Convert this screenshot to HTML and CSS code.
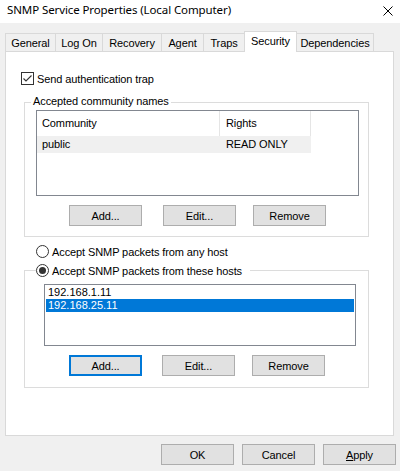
FILE: index.html
```html
<!DOCTYPE html>
<html lang="en">
<head>
  <meta charset="UTF-8">
  <meta name="viewport" content="width=device-width, initial-scale=1.0">
  <title>SNMP Service Properties</title>
  <link rel="stylesheet" href="styles.css">
</head>
<body>

  <div class="titlebar">
    <span class="title">SNMP Service Properties (Local Computer)</span>
    <svg class="close" width="10" height="10" viewBox="0 0 10 10">
      <path d="M0.5 0.5 L9.5 9.5 M9.5 0.5 L0.5 9.5" stroke="#000" stroke-width="1" fill="none"/>
    </svg>
  </div>

  <div class="tabs">
    <div class="tab tab-general">General</div>
    <div class="tab tab-logon">Log On</div>
    <div class="tab tab-recovery">Recovery</div>
    <div class="tab tab-agent">Agent</div>
    <div class="tab tab-traps">Traps</div>
    <div class="tab tab-security active">Security</div>
    <div class="tab tab-deps">Dependencies</div>
  </div>

  <div class="panel">
    <div class="check-row">
      <span class="checkbox">
        <svg width="11" height="11" viewBox="0 0 11 11">
          <path d="M1.5 5.5 L4 8 L9.5 2.5" stroke="#333" stroke-width="1.1" fill="none"/>
        </svg>
      </span>
      Send authentication trap
    </div>

    <div class="group group-community">
      <div class="group-title">Accepted community names</div>
      <div class="listview">
        <div class="lv-header">
          <div class="col col-name">Community</div>
          <div class="col col-rights">Rights</div>
        </div>
        <div class="lv-row">
          <div class="col col-name">public</div>
          <div class="col col-rights">READ ONLY</div>
        </div>
      </div>
      <div class="btn-row">
        <button class="btn btn-add">Add...</button>
        <button class="btn btn-edit">Edit...</button>
        <button class="btn btn-remove">Remove</button>
      </div>
    </div>

    <div class="radio-row radio-any">
      <span class="radio"></span>
      Accept SNMP packets from any host
    </div>

    <div class="group group-hosts">
      <div class="radio-row group-radio">
        <span class="radio checked"></span>
        Accept SNMP packets from these hosts
      </div>
      <div class="listbox">
        <div class="item">192.168.1.11</div>
        <div class="item selected">192.168.25.11</div>
      </div>
      <div class="btn-row btn-row-hosts">
        <button class="btn btn-add focused">Add...</button>
        <button class="btn btn-edit">Edit...</button>
        <button class="btn btn-remove">Remove</button>
      </div>
    </div>
  </div>

  <div class="dialog-buttons">
    <button class="btn">OK</button>
    <button class="btn">Cancel</button>
    <button class="btn"><u>A</u>pply</button>
  </div>

</body>
</html>
```

FILE: styles.css
```css
/* General Styles */
* {
  margin: 0;
  padding: 0;
  box-sizing: border-box;
}

body {
  font-family: 'Liberation Sans', Arial, sans-serif;
  font-size: 11px;
  letter-spacing: -0.1px;
  color: #000;
  background-color: #f0f0f0;
  width: 400px;
  height: 471px;
  overflow: hidden;
}

/* Title bar */
.titlebar {
  height: 23px;
  background-color: #ffffff;
  display: flex;
  align-items: center;
  justify-content: space-between;
  padding: 0 7px 4px 7px;
}

.title {
  font-family: 'Noto Sans', sans-serif;
  font-size: 11.5px;
  color: #000;
  letter-spacing: -0.1px;
}

.close {
  margin-top: 3px;
}

/* Tabs */
.tabs {
  display: flex;
  align-items: flex-end;
  margin-top: 8px;
  padding-left: 5px;
  position: relative;
  z-index: 2;
}

.tab {
  height: 18px;
  margin-bottom: 1px;
  margin-left: -1px;
  padding-top: 1px;
  border: 1px solid #d9d9d9;
  border-bottom: none;
  background-color: #f0f0f0;
  text-align: center;
  line-height: 16px;
}

.tab:first-child {
  margin-left: 0;
}

.tab.active {
  height: 21px;
  margin-bottom: 0;
  padding-top: 1px;
  background-color: #ffffff;
  line-height: 16px;
}

.tab-general { width: 51px; }
.tab-logon { width: 48px; }
.tab-recovery { width: 60px; }
.tab-agent { width: 43px; }
.tab-traps { width: 42px; }
.tab-security { width: 53px; }
.tab-deps { width: 78px; }

/* Panel */
.panel {
  margin: -1px 6px 0 5px;
  height: 385px;
  background-color: #ffffff;
  border: 1px solid #d9d9d9;
  display: flex;
  flex-direction: column;
  position: relative;
  z-index: 1;
}

.check-row {
  display: flex;
  align-items: center;
  height: 13px;
  margin-top: 20px;
  margin-left: 15px;
}

.checkbox {
  width: 13px;
  height: 13px;
  border: 1px solid #333;
  margin-right: 3px;
  display: flex;
  align-items: center;
  justify-content: center;
}

/* Group boxes */
.group {
  margin-left: 18px;
  width: 345px;
  border: 1px solid #dcdcdc;
  display: flex;
  flex-direction: column;
  align-items: flex-start;
}

.group-community {
  margin-top: 17px;
  padding-bottom: 10px;
}

.group-hosts {
  margin-top: 12px;
  padding-bottom: 11px;
}

.group-title {
  height: 13px;
  line-height: 13px;
  margin-top: -8px;
  margin-left: 6px;
  padding: 0 2px;
  background-color: #ffffff;
}

/* List view */
.listview {
  margin-top: 2px;
  margin-left: 11px;
  width: 323px;
  height: 86px;
  border: 1px solid #828790;
}

.lv-header,
.lv-row {
  display: flex;
}

.lv-header {
  height: 25px;
}

.lv-header .col {
  border-right: 1px solid #e5e5e5;
  line-height: 25px;
}

.lv-row {
  height: 17px;
  line-height: 17px;
}

.lv-row .col {
  background-color: #f0f0f0;
}

.col-name {
  width: 183px;
  padding-left: 5px;
}

.col-rights {
  width: 91px;
  padding-left: 6px;
}

/* Buttons */
.btn-row {
  display: flex;
  margin-top: 9px;
}

.btn {
  width: 73px;
  height: 21px;
  font-family: 'Liberation Sans', Arial, sans-serif;
  font-size: 11px;
  letter-spacing: -0.1px;
  color: #000;
  background-color: #e1e1e1;
  border: 1px solid #adadad;
}

.btn u {
  text-decoration: underline;
}

.btn-add { margin-left: 44px; }
.btn-edit { margin-left: 21px; }
.btn-remove { margin-left: 17px; }

.btn-row-hosts .btn-edit { margin-left: 20px; }
.btn-row-hosts .btn-remove { margin-left: 17px; }

.btn.focused {
  border: 2px solid #0078d7;
}

/* Radios */
.radio-row {
  display: flex;
  align-items: center;
  height: 13px;
}

.radio-any {
  margin-top: 8px;
  margin-left: 30px;
}

.group-radio {
  margin-top: -7px;
  margin-left: 11px;
  padding-right: 8px;
  background-color: #ffffff;
}

.radio {
  width: 13px;
  height: 13px;
  border: 1px solid #333;
  border-radius: 50%;
  margin-right: 3px;
  display: flex;
  align-items: center;
  justify-content: center;
}

.radio.checked::after {
  content: '';
  width: 7px;
  height: 7px;
  border-radius: 50%;
  background-color: #333;
}

/* List box */
.listbox {
  margin-top: 7px;
  margin-left: 19px;
  width: 312px;
  height: 62px;
  border: 1px solid #828790;
  padding: 1px;
}

.item {
  height: 13px;
  line-height: 13px;
  padding-left: 2px;
  letter-spacing: 0;
}

.item.selected {
  background-color: #0078d7;
  color: #ffffff;
}

/* Dialog buttons */
.dialog-buttons {
  display: flex;
  justify-content: flex-end;
  gap: 8px;
  margin-top: 8px;
  padding-right: 4px;
}
```
